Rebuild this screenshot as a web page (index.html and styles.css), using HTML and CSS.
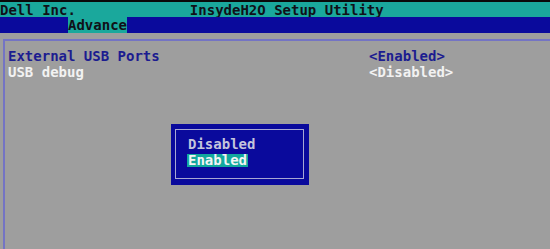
FILE: index.html
```html
<!DOCTYPE html>
<html>
<head>
<meta charset="utf-8">
<link rel="stylesheet" href="styles.css">
</head>
<body>
<div class="screen">
  <div class="topline"></div>
  <div class="titlebar">
    <span class="vendor">Dell Inc.</span>
    <span class="title">InsydeH2O Setup Utility</span>
  </div>
  <div class="menubar">
    <span class="tab active">Advance</span>
  </div>
  <div class="main">
    <div class="panel">
      <div class="row current">
        <span class="label">External USB Ports</span>
        <span class="value">&lt;Enabled&gt;</span>
      </div>
      <div class="row">
        <span class="label">USB debug</span>
        <span class="value">&lt;Disabled&gt;</span>
      </div>
    </div>
    <div class="popup">
      <div class="popup-inner">
        <span class="opt">Disabled</span>
        <span class="opt sel">Enabled</span>
      </div>
    </div>
  </div>
</div>
</body>
</html>
```
FILE: styles.css
```css
html, body {
  margin: 0;
  padding: 0;
  background: #9e9e9e;
}
.screen {
  width: 550px;
  height: 249px;
  display: flex;
  flex-direction: column;
  font-family: "DejaVu Sans Mono", "Liberation Mono", monospace;
  font-weight: bold;
  font-size: 14px;
  overflow: hidden;
}
.topline {
  height: 2px;
  background: #0a0a0a;
}
.titlebar {
  height: 15px;
  line-height: 16px;
  background: #1aa89c;
  color: #101018;
  display: flex;
  gap: 114px;
  white-space: pre;
}
.menubar {
  height: 16px;
  line-height: 17px;
  background: #0a0a9c;
  padding-left: 68px;
  display: flex;
}
.tab.active {
  background: #1aa89c;
  color: #101018;
}
.main {
  flex: 1;
  position: relative;
  background: #9e9e9e;
  padding-top: 6px;
  padding-left: 3px;
  display: flex;
  flex-direction: column;
}
.panel {
  flex: 1;
  border-top: 2px solid #7474c4;
  border-left: 2px solid #7474c4;
  padding: 7px 0 0 3px;
}
.row {
  display: grid;
  grid-template-columns: 361px auto;
  height: 16px;
  line-height: 16px;
  color: #f2f2f2;
  white-space: pre;
}
.row.current {
  color: #1c1c90;
}
.popup {
  position: absolute;
  left: 171px;
  top: 91px;
  width: 138px;
  height: 61px;
  box-sizing: border-box;
  background: #0a0a9c;
  padding: 5px 5px 6px 4px;
  display: flex;
}
.popup-inner {
  flex: 1;
  border: 1px solid #a8a8d4;
  padding: 6px 0 0 12px;
  display: flex;
  flex-direction: column;
  align-items: flex-start;
}
.opt {
  height: 16px;
  line-height: 16px;
  color: #c4c4dc;
  white-space: pre;
}
.opt.sel {
  height: 13px;
  line-height: 13px;
  margin-top: 2px;
  background: #12a89e;
  color: #f4f4f4;
  margin-left: -1px;
  padding: 0 1px;
}
```
